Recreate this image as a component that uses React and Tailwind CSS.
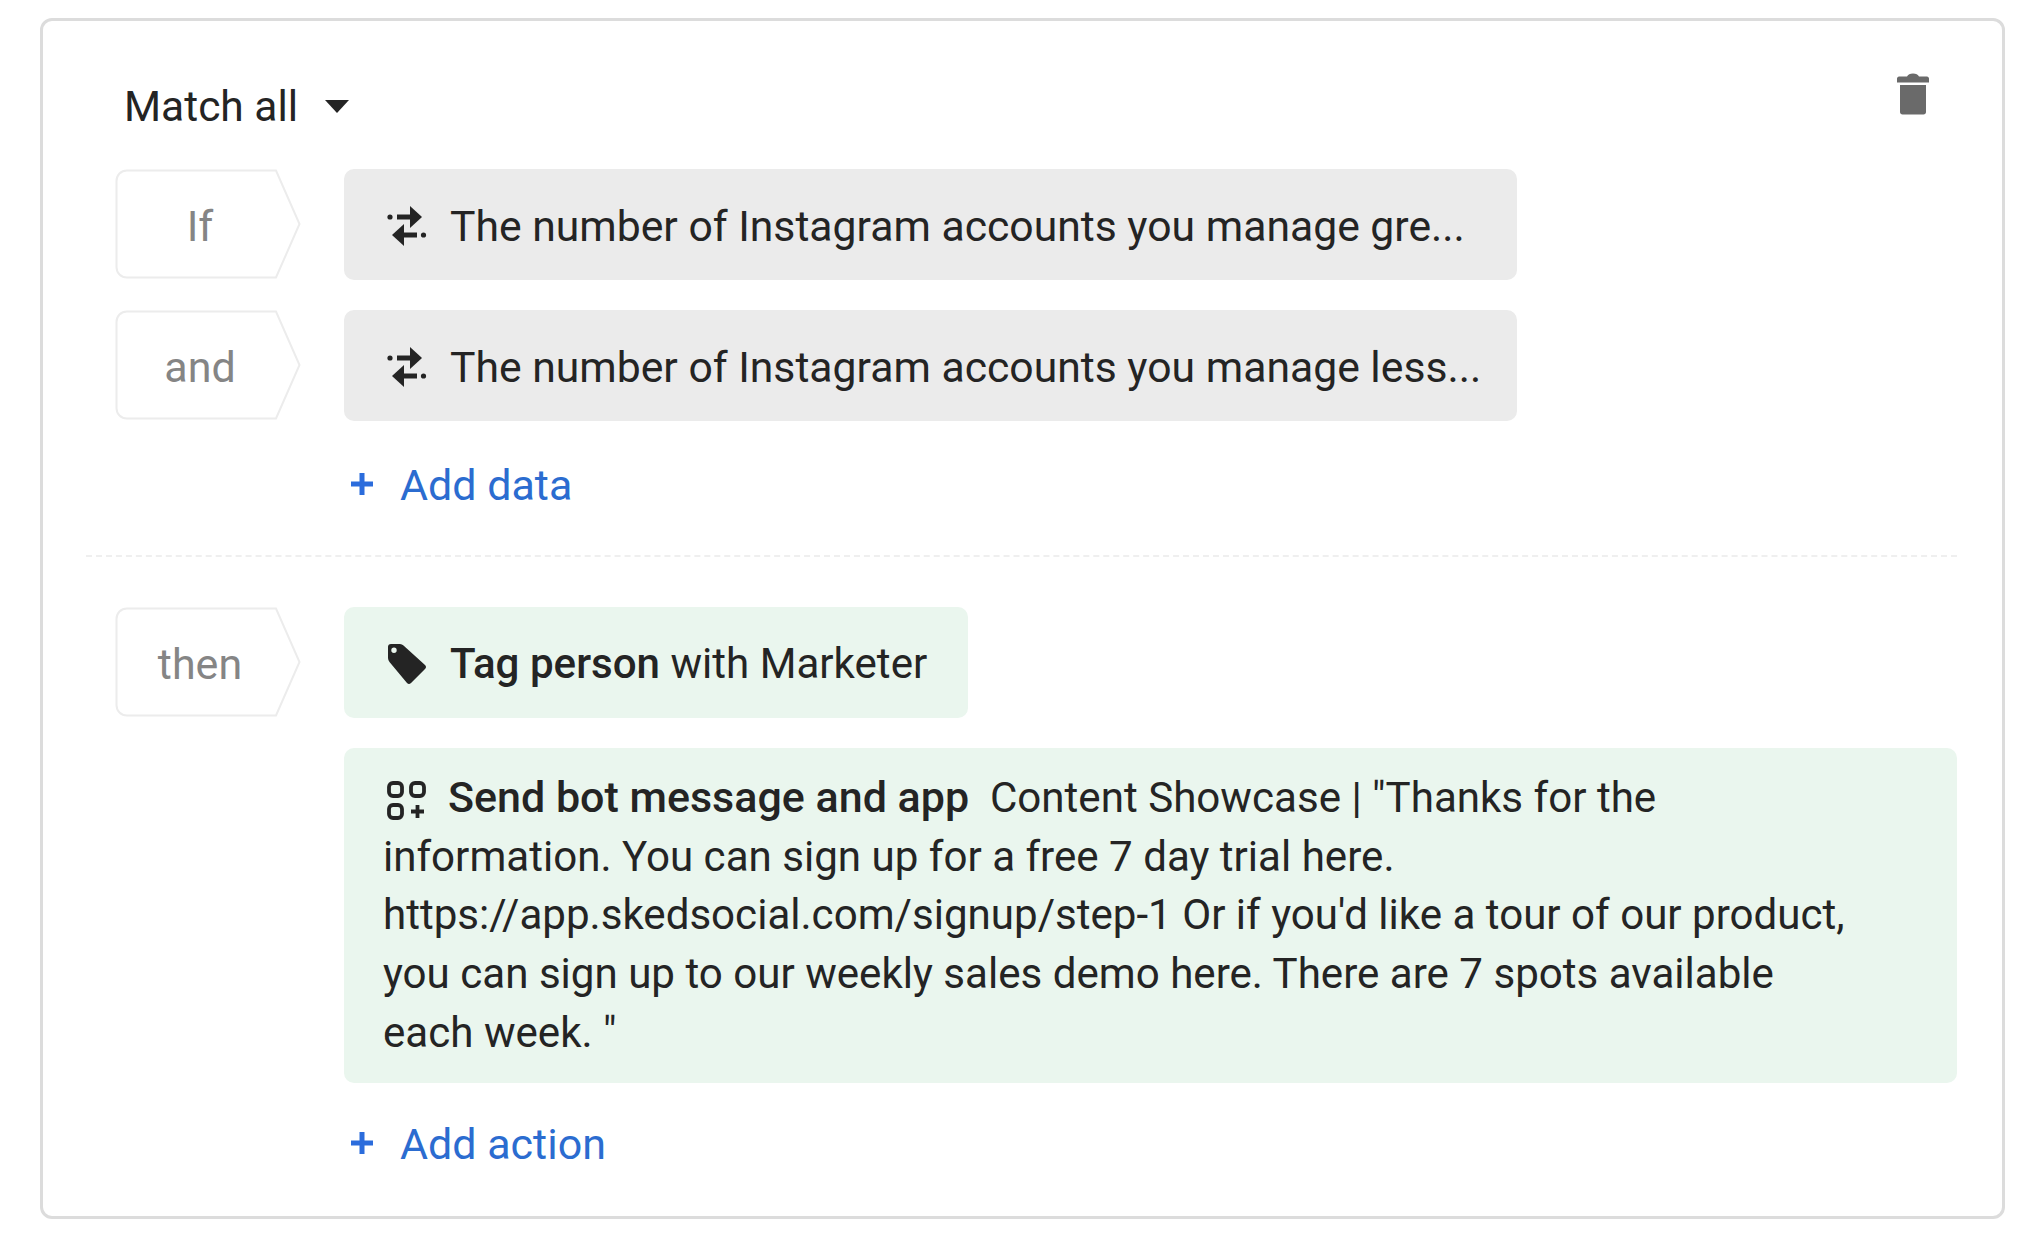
import React from "react";

const SwapIcon = () => (
  <svg viewBox="0 0 40 42" className="w-[40px] h-[42px] shrink-0" fill="none">
    <circle cx="3" cy="12" r="2.600" fill="#242424" />
    <path d="M10 12h14" stroke="#242424" strokeWidth="5" />
    <path d="M23 1l12 11-12 11z" fill="#242424" />
    <path d="M15 30h15" stroke="#242424" strokeWidth="5" />
    <path d="M17 19L5 30l12 11z" fill="#242424" />
    <circle cx="36.500" cy="30" r="2.600" fill="#242424" />
  </svg>
);

const TagIcon = () => (
  <svg viewBox="0 0 40 44" className="w-[40px] h-[44px] shrink-0">
    <path
      fillRule="evenodd"
      d="M1 5Q1 2 4 2H13Q15 2 16.500 3.500L38 23Q40 25 38 27L24 41Q22 43 20 41L2.500 20Q1 18 1 16ZM7 5.500a2.700 2.700 0 100 5.400 2.700 2.700 0 000-5.400z"
      fill="#242424"
    />
  </svg>
);

const AppsIcon = () => (
  <svg
    viewBox="0 0 40 40"
    className="inline-block w-[40px] h-[40px] align-[-9px] ml-[4px] mr-[21px]"
    fill="none"
    stroke="#242424"
    strokeWidth="3.800"
  >
    <rect x="2" y="2" width="13" height="13" rx="4" />
    <rect x="24" y="2" width="13" height="13" rx="4" />
    <rect x="2" y="24" width="13" height="13" rx="4" />
    <path d="M30.500 24v13M24 30.500h13" />
  </svg>
);

const TrashIcon = () => (
  <svg viewBox="0 0 34 42" className="w-[34px] h-[42px]" fill="#6a6a6a">
    <path d="M1 5.500C1 4.500 2 3.500 3 3.500h8C12 1.500 14 .5 17 .5s5 1 6 3h8c1 0 2 1 2 2V9.500H1z" />
    <path d="M4 12h26v27c0 1.500-1 2.500-2.500 2.500h-21C5 41.500 4 40.500 4 39z" />
  </svg>
);

const PlusIcon = () => (
  <svg viewBox="0 0 24 24" className="w-[24px] h-[24px]" fill="none" stroke="#2b6cdc" strokeWidth="5">
    <path d="M12 1v22M1 12h22" />
  </svg>
);

// Arrow shaped label on the left of each row
const Chip = ({ label }) => (
  <div className="relative w-[186px] h-[110px] shrink-0 flex items-center justify-center pt-[4px] pr-[16px]">
    <svg viewBox="0 0 186 110" className="absolute inset-0 w-full h-full" fill="none">
      <path
        d="M12 1.500H161L184.500 55 161 108.500H12C6 108.500 1.500 104 1.500 98V12C1.500 6 6 1.500 12 1.500Z"
        stroke="#ececec"
        strokeWidth="2"
      />
    </svg>
    <span className="relative text-[43px] text-[#858585]">{label}</span>
  </div>
);

const DataRow = ({ label, text }) => (
  <div className="flex gap-[43px]">
    <Chip label={label} />
    <div className="w-[1173px] h-[111px] bg-[#ebebeb] rounded-[10px] flex items-center pl-[43px] pt-[3px] gap-[23px] text-[42.700px] text-[#242424] whitespace-nowrap">
      <SwapIcon />
      <span>{text}</span>
    </div>
  </div>
);

const AddLink = ({ label }) => (
  <div className="flex items-center h-[44px] pl-[6px] gap-[26px] text-[43px] text-[#2b6cd0]">
    <PlusIcon />
    <span className="pt-[2px]">{label}</span>
  </div>
);

export default function App() {
  return (
    <div className="min-h-screen bg-white pt-[18px] pl-[40px] [font-family:Roboto,'Liberation_Sans',sans-serif]">
      <div className="w-[1965px] h-[1201px] border-[3px] border-[#dcdcdc] rounded-[12px] pt-[63px] pl-[72px] pr-[45px]">
        <div className="flex items-center justify-between h-[44px] pl-[9px] pr-[27px]">
          <div className="flex items-center gap-[27px] text-[42.500px] text-[#242424]">
            <span className="pt-[2px]">Match all</span>
            <div className="w-0 h-0 border-x-[12px] border-x-transparent border-t-[13px] border-t-[#242424]" />
          </div>
          <div className="mb-[24px]">
            <TrashIcon />
          </div>
        </div>

        <div className="mt-[41px] flex flex-col gap-[30px]">
          <DataRow label="If" text="The number of Instagram accounts you manage gre..." />
          <DataRow label="and" text="The number of Instagram accounts you manage less..." />
        </div>

        <div className="mt-[41px] ml-[229px]">
          <AddLink label="Add data" />
        </div>

        <div className="mt-[49px] -ml-[29px] border-t-2 border-dashed border-[#efefef]" />

        <div className="mt-[50px] flex gap-[43px]">
          <Chip label="then" />
          <div className="flex flex-col gap-[30px]">
            <div className="w-[624px] h-[111px] bg-[#eaf6ee] rounded-[10px] flex items-center pl-[43px] pt-[3px] gap-[23px] text-[42.100px] text-[#242424] whitespace-nowrap">
              <TagIcon />
              <p>
                <span className="font-medium">Tag person</span> with Marketer
              </p>
            </div>
            <div className="w-[1613px] h-[335px] bg-[#eaf6ee] rounded-[10px] pl-[39px] pr-[96px] pt-[20px] text-[42.100px] leading-[58.700px] text-[#242424]">
              <p>
                <AppsIcon />
                <span className="font-medium text-[43px]">Send bot message and app</span>
                <span>{"\u00a0\u00a0"}Content Showcase | "Thanks for the</span>
              </p>
              <p>
                information. You can sign up for a free 7 day trial here. https://app.skedsocial.com/signup/step-1 Or if
                you'd like a tour of our product, you can sign up to our weekly sales demo here. There are 7 spots
                available each week. "
              </p>
            </div>
          </div>
        </div>

        <div className="mt-[38px] ml-[229px]">
          <AddLink label="Add action" />
        </div>
      </div>
    </div>
  );
}
